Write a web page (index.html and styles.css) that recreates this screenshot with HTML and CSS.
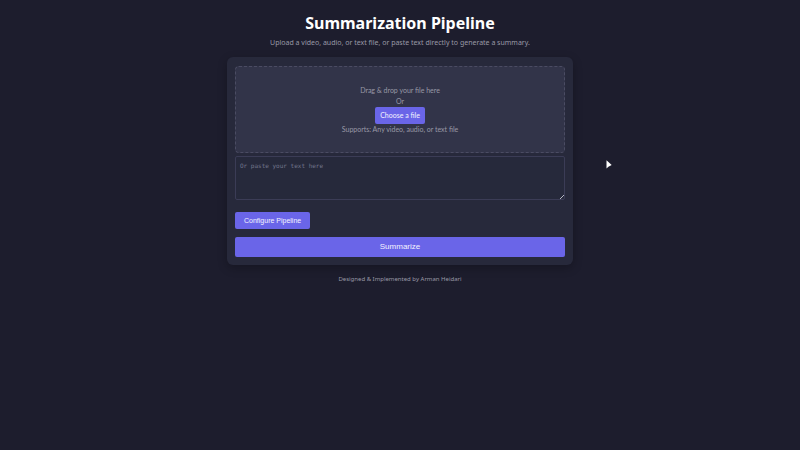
FILE: index.html
```html
<!DOCTYPE html>
<html lang="en">
<head>
<meta charset="utf-8">
<meta name="viewport" content="width=device-width, initial-scale=1">
<title>Summarization Pipeline</title>
<link rel="stylesheet" href="styles.css">
</head>
<body>
<header class="intro">
  <h1>Summarization Pipeline</h1>
  <p>Upload a video, audio, or text file, or paste text directly to generate a summary.</p>
</header>
<main class="card">
  <section class="dropzone">
    <p>Drag &amp; drop your file here</p>
    <p>Or</p>
    <button type="button" class="btn btn-file">Choose a file</button>
    <p>Supports: Any video, audio, or text file</p>
  </section>
  <textarea class="paste" aria-label="Text to summarize" placeholder="Or paste your text here"></textarea>
  <button type="button" class="btn btn-configure">Configure Pipeline</button>
  <button type="button" class="btn btn-summarize">Summarize</button>
</main>
<footer class="credit">Designed &amp; Implemented by Arman Heidari</footer>
<svg class="pointer" viewBox="0 0 6 9" aria-hidden="true"><path d="M.5 .3V8.4L2.4 6.7 5.7 5.1Z"/></svg>
</body>
</html>
```
FILE: styles.css
```css
* {
  box-sizing: border-box;
}

body {
  margin: 0;
  padding: 12px 16px;
  min-height: 100vh;
  background: #1d1d2d;
  color: #9999a6;
  font: 7px/11px Lato, "Open Sans", sans-serif;
}

h1,
p {
  margin: 0;
}

.intro {
  text-align: center;
}

h1 {
  color: #fff;
  font: bold 16px/23px "Noto Sans", sans-serif;
}

.intro p {
  margin-top: 2px;
  font-family: "Noto Sans", sans-serif;
}

.card {
  display: flex;
  flex-direction: column;
  max-width: 346px;
  margin: 9px auto 0;
  padding: 9px 8px 8px;
  border-radius: 6px;
  background: #27293b;
  box-shadow: 0 3px 10px rgba(0, 0, 0, 0.25);
}

.dropzone {
  display: flex;
  flex-direction: column;
  align-items: center;
  padding: 18px 8px 17px;
  border: 1px dashed #4b4c63;
  border-radius: 4px;
  background: #323449;
}

.btn {
  border: 0;
  border-radius: 2px;
  background: #6a65e8;
  color: #f4f3ff;
  font: 7px/11px "Liberation Sans", Arial, sans-serif;
}

.btn-file {
  padding: 3px 5px;
  font-family: Lato, "Open Sans", sans-serif;
}

.paste {
  height: 44px;
  margin-top: 3px;
  padding: 4px;
  border: 1px solid #3b3c56;
  border-radius: 2px;
  background: #26293b;
  color: #d6d6e2;
  font: 6px/10px "DejaVu Sans Mono", monospace;
  resize: vertical;
}

.paste::placeholder {
  color: #72768c;
}

.paste::-webkit-resizer {
  background: linear-gradient(135deg, transparent 47%, #b5b6c2 47%, #b5b6c2 60%, transparent 60%) right bottom / 4px 4px no-repeat;
}

.btn-configure {
  align-self: flex-start;
  margin-top: 12px;
  padding: 3px 9px;
}

.btn-summarize {
  margin-top: 8px;
  padding: 4px 8px;
  font-size: 8px;
  line-height: 12px;
}

.credit {
  margin-top: 9px;
  text-align: center;
  font-family: "Noto Sans", sans-serif;
  font-size: 6px;
}

.pointer {
  position: absolute;
  left: 606px;
  top: 160px;
  width: 6px;
  height: 9px;
  fill: #fff;
}
```
